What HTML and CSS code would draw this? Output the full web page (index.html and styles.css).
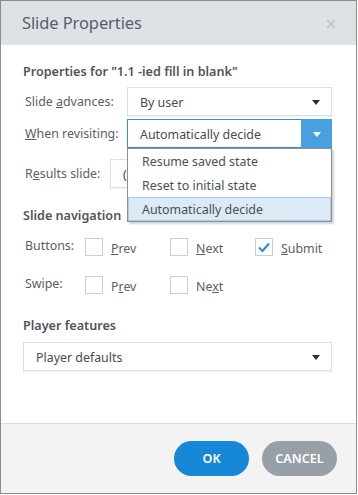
FILE: index.html
```html
<!DOCTYPE html>
<html>
<head>
<meta charset="utf-8">
<link rel="stylesheet" href="styles.css">
</head>
<body>
<div class="dialog">
  <div class="header">
    <span class="title">Slide Properties</span>
    <svg class="close" width="10" height="10" viewBox="0 0 10 10"><path d="M1 1L9 9M9 1L1 9" stroke="#c3c8cc" stroke-width="2"/></svg>
  </div>
  <div class="content">
    <div class="heading h-first">Properties for "1.1 -ied fill in blank"</div>
    <div class="row r-adv">
      <label class="lbl">Slide <u>a</u>dvances:</label>
      <div class="select">
        <span class="val">By user</span>
        <span class="arrow"></span>
      </div>
    </div>
    <div class="row r-rev">
      <label class="lbl"><u>W</u>hen revisiting:</label>
      <div class="select open">
        <span class="val">Automatically decide</span>
        <span class="btn"><span class="arrow white"></span></span>
        <div class="menu">
          <div class="item">Resume saved state</div>
          <div class="item">Reset to initial state</div>
          <div class="item sel">Automatically decide</div>
        </div>
      </div>
    </div>
    <div class="row r-res">
      <label class="lbl short">R<u>e</u>sults slide:</label>
      <div class="select res">
        <span class="val">(</span>
      </div>
    </div>
    <div class="heading h-nav">Slide navigation</div>
    <div class="crow">
      <span class="clbl">Buttons:</span>
      <span class="cb"></span><span class="ctxt w1"><u>P</u>rev</span>
      <span class="cb"></span><span class="ctxt w2"><u>N</u>ext</span>
      <span class="cb"><svg width="14" height="14" viewBox="0 0 14 14"><path d="M2 7.5L5.5 11L12 3.5" fill="none" stroke="#2b8ad6" stroke-width="2"/></svg></span><span class="ctxt"><u>S</u>ubmit</span>
    </div>
    <div class="crow r-swipe">
      <span class="clbl">Swipe:</span>
      <span class="cb"></span><span class="ctxt w1">P<u>r</u>ev</span>
      <span class="cb"></span><span class="ctxt w2">Ne<u>x</u>t</span>
    </div>
    <div class="heading h-player">Player features</div>
    <div class="select full">
      <span class="val">Player defaults</span>
      <span class="arrow"></span>
    </div>
  </div>
  <div class="footer">
    <button class="b ok">OK</button>
    <button class="b cancel">CANCEL</button>
  </div>
</div>
</body>
</html>
```

FILE: styles.css
```css
* { box-sizing: border-box; }
html, body { margin: 0; padding: 0; background: #fff; }
body { font-family: "Noto Sans", "Open Sans", sans-serif; color: #555b60; }
.dialog {
  width: 357px; height: 494px;
  border: 1px solid #8c8c8c;
  display: flex; flex-direction: column;
  background: #fff;
}
.header {
  height: 44px; flex: none;
  background: #dde2e6;
  display: flex; align-items: center; justify-content: space-between;
  padding: 0 20px 1px 21px;
}
.title { font-size: 16.5px; color: #566069; letter-spacing: -0.1px; }
.close { margin-top: 2px; }
.content {
  flex: 1;
  padding: 0 24px 0 22px;
  font-size: 12.4px;
}
.heading { font-weight: 600; font-size: 12.6px; color: #4f555a; line-height: 18px; }
.h-first { margin-top: 18px; }
.row { display: flex; align-items: center; }
.lbl { width: 104px; flex: none; padding-left: 2px; color: #5a6065; }
.lbl.short { width: 87px; }
.r-adv { margin-top: 6px; }
.r-rev { margin-top: 3px; }
.r-res { margin-top: 11px; }
.select {
  position: relative;
  flex: 1;
  height: 29px;
  border: 1px solid #dbe0e3;
  box-shadow: 0 1px 1px rgba(0,0,0,0.06);
  display: flex; align-items: center; justify-content: space-between;
  padding-left: 12px; padding-right: 11px;
  color: #464c51;
  background: #fff;
}
.select.open { border-color: #3a8fd4; padding-right: 0; }
.select.full { margin-top: 7px; flex: none; }
.val { font-size: 12.4px; margin-top: 1px; }
.arrow {
  width: 0; height: 0;
  border-left: 4px solid transparent; border-right: 4px solid transparent;
  border-top: 5px solid #2e2e2e;
  margin-top: 1px;
}
.arrow.white { border-top-color: #fff; }
.btn {
  width: 31px; height: 29px; margin: -1px -1px -1px 0;
  background: #48a0e1;
  display: flex; align-items: center; justify-content: center;
}
.menu {
  position: absolute; left: -1px; top: 100%; right: -1px;
  margin-top: 1px;
  border: 1px solid #8f8f8f;
  background: #fff;
  box-shadow: 2px 2px 2px rgba(0,0,0,0.18);
  z-index: 5;
}
.item {
  height: 24px; line-height: 24px;
  padding-left: 13px;
  border: 1px solid transparent;
  color: #4a5055;
  font-size: 12.4px;
}
.item.sel { background: #dce9f6; border-color: #a9cdec; }
.h-nav { margin-top: 19px; }
.crow { display: flex; align-items: center; margin-top: 13px; height: 18px; }
.r-swipe { margin-top: 20px; }
.clbl { width: 62px; flex: none; padding-left: 2px; margin-top: -4px; color: #5a6065; }
.cb {
  width: 18px; height: 18px; flex: none;
  border: 1px solid #c9cfd4;
  display: flex; align-items: center; justify-content: center;
}
.ctxt { margin-left: 8px; color: #5a6065; margin-top: 2px; }
.ctxt.w1 { width: 59px; }
.ctxt.w2 { width: 59px; }
.h-player { margin-top: 23px; }
.footer {
  height: 70px; flex: none;
  border-top: 1px solid #dcdcdc;
  background: #f3f3f3;
  display: flex; justify-content: flex-end; align-items: flex-start;
  padding: 17px 19px 0 0;
  gap: 13px;
}
.b {
  width: 75px; height: 35px;
  border: none; border-radius: 18px;
  color: #fff;
  font-family: "Noto Sans", "Open Sans", sans-serif;
  font-size: 12.6px; font-weight: 600;
  padding: 0;
}
.ok { background: #1787d8; }
.cancel { background: #97a0a7; }
```
